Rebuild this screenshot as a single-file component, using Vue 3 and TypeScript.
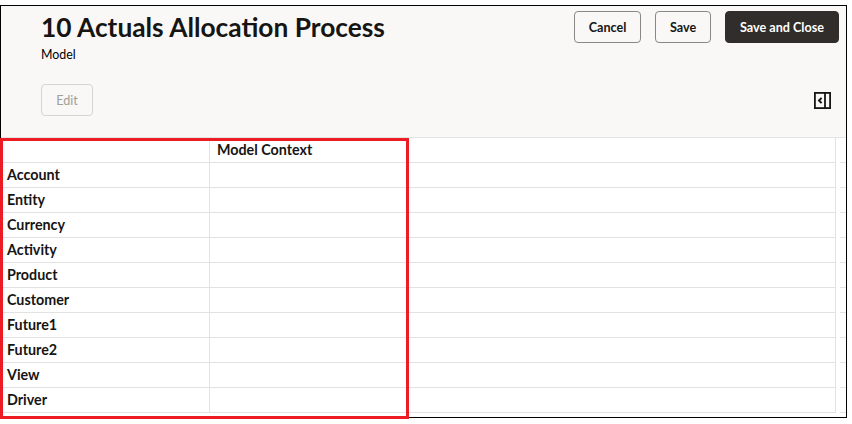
<script setup lang="ts">
const dimensions: string[] = [
  'Account',
  'Entity',
  'Currency',
  'Activity',
  'Product',
  'Customer',
  'Future1',
  'Future2',
  'View',
  'Driver',
]
</script>

<template>
  <div class="page">
    <div class="frame">
      <header class="header">
        <div class="top-row">
          <div class="titles">
            <h1 class="title">10 Actuals Allocation Process</h1>
            <div class="subtitle">Model</div>
          </div>
          <div class="actions">
            <button class="btn btn-cancel">Cancel</button>
            <button class="btn btn-save">Save</button>
            <button class="btn btn-primary">Save and Close</button>
          </div>
        </div>
        <div class="tool-row">
          <button class="btn btn-edit" disabled>Edit</button>
          <svg class="panel-icon" width="17" height="17" viewBox="0 0 17 17" fill="none">
            <rect x="0.9" y="0.9" width="15.2" height="15.2" stroke="#161513" stroke-width="1.8" />
            <path d="M11 1v15" stroke="#161513" stroke-width="1.8" />
            <path d="M7.6 5.9 5 8.5l2.6 2.6" stroke="#161513" stroke-width="2" />
          </svg>
        </div>
      </header>
      <div class="grid">
        <div class="row row-head">
          <div class="cell cell-name"></div>
          <div class="cell cell-value">Model Context</div>
          <div class="cell-tail"></div>
        </div>
        <div v-for="name in dimensions" :key="name" class="row">
          <div class="cell cell-name">{{ name }}</div>
          <div class="cell cell-value"></div>
          <div class="cell-tail"></div>
        </div>
      </div>
    </div>
    <div class="highlight"></div>
  </div>
</template>

<style>
body {
  background: #fff;
}
</style>

<style scoped>
.page {
  position: relative;
  width: 852px;
  height: 424px;
  padding-top: 5px;
  box-sizing: border-box;
  background: #fff;
  font-family: Lato, 'Noto Sans', sans-serif;
  color: #161513;
  overflow: hidden;
}

.frame {
  width: 847px;
  height: 413px;
  box-sizing: border-box;
  border: 1px solid #000;
}

.header {
  height: 132px;
  box-sizing: border-box;
  padding: 5px 7px 0 40px;
  background: #f9f8f6;
  border-bottom: 1px solid #e5e4e2;
}

.top-row {
  display: flex;
  justify-content: space-between;
  align-items: flex-start;
}

.title {
  margin: 0;
  font-size: 26.3px;
  line-height: 32px;
  font-weight: 700;
}

.subtitle {
  margin-top: 4px;
  font-size: 12.4px;
  line-height: 16px;
  color: #000;
}

.actions {
  display: flex;
  gap: 14px;
}

.btn {
  height: 32px;
  padding: 0;
  box-sizing: border-box;
  border: 1px solid #8a8886;
  border-radius: 4px;
  background: transparent;
  color: #161513;
  font-family: inherit;
  font-size: 12.6px;
  font-weight: 700;
}

.btn-cancel {
  width: 67px;
}

.btn-save {
  width: 56px;
}

.btn-primary {
  width: 114px;
  border-color: #312d2a;
  background: #312d2a;
  color: #fff;
}

.btn-edit {
  width: 52px;
  border-color: #d6d5d3;
  color: #a09e9b;
  font-weight: 400;
}

.tool-row {
  display: flex;
  justify-content: space-between;
  align-items: center;
  margin-top: 21px;
  padding-right: 8px;
}

.grid {
  font-size: 14.3px;
}

.row {
  display: flex;
  height: 25px;
}

.cell {
  box-sizing: border-box;
  height: 100%;
  border-bottom: 1px solid #e3e2e0;
  line-height: 24px;
  font-weight: 700;
  white-space: nowrap;
}

.cell-name {
  width: 209px;
  padding-left: 6px;
  border-right: 1px solid #e3e2e0;
}

.cell-value {
  width: 626px;
  padding-left: 7px;
  border-right: 1px solid #e3e2e0;
}

.cell-tail {
  box-sizing: border-box;
  flex: 1;
  margin-left: 4px;
  border-bottom: 1px solid #e3e2e0;
}

.highlight {
  position: absolute;
  left: 0;
  top: 138px;
  width: 409px;
  height: 281px;
  box-sizing: border-box;
  border: 3px solid #ed1c24;
  pointer-events: none;
}
</style>
